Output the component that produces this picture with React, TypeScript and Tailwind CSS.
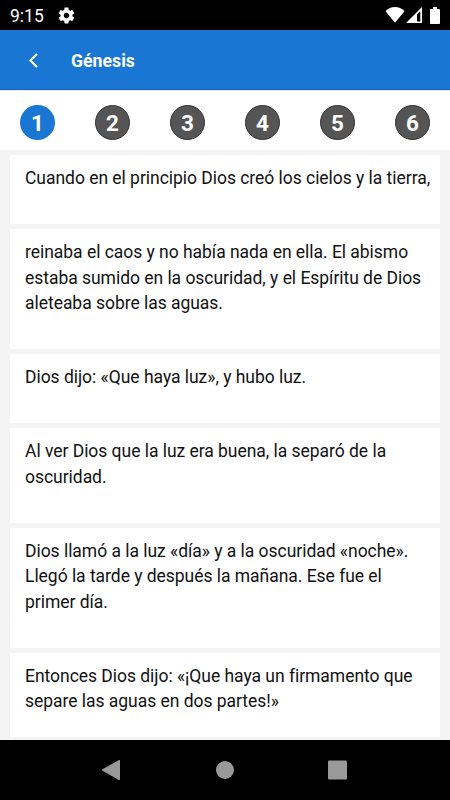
import React from "react";
import clsx from "clsx";

const chapters = [1, 2, 3, 4, 5, 6];

const verses = [
  ["Cuando en el principio Dios creó los cielos y la tierra,"],
  [
    "reinaba el caos y no había nada en ella. El abismo",
    "estaba sumido en la oscuridad, y el Espíritu de Dios",
    "aleteaba sobre las aguas."
  ],
  ["Dios dijo: «Que haya luz», y hubo luz."],
  ["Al ver Dios que la luz era buena, la separó de la", "oscuridad."],
  [
    "Dios llamó a la luz «día» y a la oscuridad «noche».",
    "Llegó la tarde y después la mañana. Ese fue el",
    "primer día."
  ],
  [
    "Entonces Dios dijo: «¡Que haya un firmamento que",
    "separe las aguas en dos partes!»"
  ]
];

const StatusBar = () => (
  <div className="flex h-[30px] shrink-0 items-center bg-black pl-[10px] pr-[10px] text-white">
    <span className="pt-px text-[17.5px] leading-[30px]">9:15</span>
    <svg viewBox="0 0 24 24" className="ml-[13px] size-[19px] fill-white">
      <path d="M19.43 12.98c.04-.32.07-.64.07-.98s-.03-.66-.07-.98l2.11-1.65c.19-.15.24-.42.12-.64l-2-3.46c-.12-.22-.39-.3-.61-.22l-2.49 1c-.52-.4-1.08-.73-1.69-.98l-.38-2.65C14.46 2.18 14.25 2 14 2h-4c-.25 0-.46.18-.49.42l-.38 2.65c-.61.25-1.17.59-1.69.98l-2.49-1c-.23-.09-.49 0-.61.22l-2 3.46c-.13.22-.07.49.12.64l2.11 1.65c-.04.32-.07.65-.07.98s.03.66.07.98l-2.11 1.65c-.19.15-.24.42-.12.64l2 3.46c.12.22.39.3.61.22l2.49-1c.52.4 1.08.73 1.69.98l.38 2.65c.03.24.24.42.49.42h4c.25 0 .46-.18.49-.42l.38-2.65c.61-.25 1.17-.59 1.69-.98l2.49 1c.23.09.49 0 .61-.22l2-3.46c.12-.22.07-.49-.12-.64l-2.11-1.65zM12 15.5c-1.93 0-3.5-1.57-3.5-3.5s1.57-3.5 3.5-3.5 3.5 1.57 3.5 3.5-1.57 3.5-3.5 3.5z" />
    </svg>
    <svg viewBox="0 0 20 16" className="ml-auto h-4 w-5 fill-white">
      <path d="M.5 4.2C3.2 1.2 6.4 0 10 0s6.8 1.2 9.5 4.2L10 15.8z" />
    </svg>
    <svg viewBox="0 0 16 16" className="ml-px h-4 w-4">
      <path d="M0 16 16 0v16z" className="fill-white" />
      <path d="M11 7.200 14.300 4.200v10.300H11z" className="fill-black" />
    </svg>
    <svg viewBox="0 0 10 17" className="ml-2 h-[17px] w-[10px] fill-white">
      <path d="M3 0h4v2h2.200q.8 0 .8.8v13.400q0 .8-.8.8H.8q-.8 0-.8-.8V2.800Q0 2 .8 2H3z" />
    </svg>
  </div>
);

const Header = () => (
  <header className="flex h-[60px] shrink-0 items-center border-b border-[#1565c0] bg-[#1976d2] text-white">
    <svg
      viewBox="0 0 10 16"
      className="ml-[28px] h-4 w-[10px] fill-none stroke-white stroke-[2.2]"
    >
      <path d="M9 2 2.500 8.500l6.500 6.500" />
    </svg>
    <h1 className="ml-[33px] pt-[3px] text-[17.7px] font-bold">Génesis</h1>
  </header>
);

const ChapterList = () => (
  <nav className="flex h-[60px] shrink-0 items-center justify-between border-t border-[#f1f1f1] bg-white px-5 pt-1">
    {chapters.map((chapter) => (
      <button
        key={chapter}
        className={clsx(
          "flex size-[35px] items-center justify-center rounded-full pt-[2px] text-[22.5px] font-bold leading-none text-white",
          chapter === 1
            ? "bg-[#1976d2]"
            : "border border-[#333] bg-[#555]"
        )}
      >
        {chapter}
      </button>
    ))}
  </nav>
);

const NavigationBar = () => (
  <div className="flex h-[60px] shrink-0 items-center justify-center bg-black">
    <svg viewBox="0 0 246 20" className="h-5 w-[246px] fill-[#999]">
      <path d="M.4 9.300 17 0q1-.3 1 .7v18.600q0 1-1 .7L.4 10.700q-.8-.7 0-1.400z" />
      <circle cx="123" cy="10" r="9" />
      <rect x="226" y=".5" width="19" height="19" rx="1" />
    </svg>
  </div>
);

export default function App() {
  return (
    <div className="flex h-[800px] w-[450px] flex-col overflow-hidden bg-[#f4f4f4] font-['Roboto',sans-serif]">
      <StatusBar />
      <Header />
      <ChapterList />
      <main className="flex min-h-0 flex-1 flex-col overflow-hidden px-[10px] pt-[5px] pb-[3px]">
        <div className="flex min-h-0 flex-1 flex-col gap-[5px] overflow-hidden">
          {verses.map((lines) => (
            <p
              key={lines[0]}
              className="shrink-0 whitespace-nowrap bg-white pt-[11px] pr-[10px] pb-[33px] pl-[15px] text-[17.5px] leading-[25.3px] tracking-[-0.035px] text-[#111]"
            >
              {lines.map((line) => (
                <span key={line} className="block">
                  {line}
                </span>
              ))}
            </p>
          ))}
        </div>
      </main>
      <NavigationBar />
    </div>
  );
}
